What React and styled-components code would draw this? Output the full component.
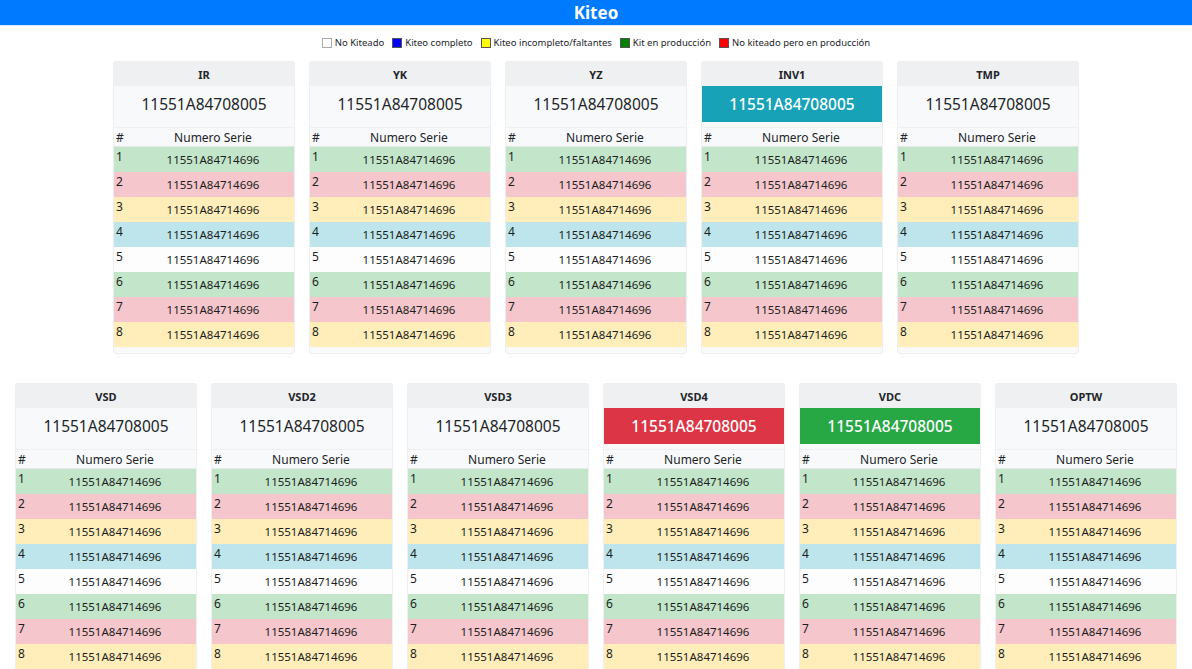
import React from 'react';
import styled, { createGlobalStyle } from 'styled-components';

const GlobalStyle = createGlobalStyle`
  html, body {
    margin: 0;
    padding: 0;
    background: #ffffff;
    font-family: "Noto Sans", "Open Sans", Arial, sans-serif;
    color: #212529;
  }
`;

const Page = styled.div`
  width: 1192px;
  min-height: 669px;
`;

const TopBar = styled.header`
  height: 25px;
  background: #007bff;
  color: #fff;
  display: flex;
  align-items: center;
  justify-content: center;
  font-size: 17px;
  font-weight: 700;
  border-bottom: 1px solid #d6e8ff;
`;

const Legend = styled.div`
  display: flex;
  justify-content: center;
  gap: 8px;
  margin-top: 11px;
  font-size: 9.5px;
  line-height: 12px;
`;

const LegendItem = styled.div`
  display: flex;
  align-items: center;
  gap: 3px;
`;

const Swatch = styled.span`
  width: 8px;
  height: 8px;
  background: ${p => p.$color};
  border: 1px solid ${p => (p.$color === '#ffffff' ? '#aaaaaa' : '#555')};
`;

const CardRow = styled.div`
  display: flex;
  justify-content: center;
  gap: 16px;
  margin-top: ${p => p.$top}px;
`;

const Card = styled.div`
  width: 180px;
  background: #f8f9fa;
  border-radius: 2px;
  box-shadow: 0 0 0 1px #eceef0;
  padding-bottom: 6px;
`;

const CardTitle = styled.div`
  height: 24px;
  background: #eff0f2;
  display: flex;
  align-items: center;
  justify-content: center;
  font-size: 11px;
  font-weight: 700;
`;

const Serial = styled.div`
  height: 36px;
  display: flex;
  align-items: center;
  justify-content: center;
  font-size: 15.5px;
  background: ${p => p.$bg || 'transparent'};
  color: ${p => (p.$bg ? '#fff' : '#212529')};
  font-weight: ${p => (p.$bg ? 500 : 400)};
  margin-bottom: 5px;
`;

const TableHead = styled.div`
  display: grid;
  grid-template-columns: 18px 1fr;
  height: 20px;
  align-items: center;
  font-size: 12px;
  border-top: 1px solid #eef0f2;
  border-bottom: 1px solid #e6e8ea;
  background: #f8f9fa;
  box-sizing: border-box;
`;

const HeadCell = styled.div`
  text-align: ${p => (p.$center ? 'center' : 'left')};
  padding-left: ${p => (p.$center ? 0 : 2)}px;
`;

const Row = styled.div`
  display: grid;
  grid-template-columns: 18px 1fr;
  height: 25px;
  background: ${p => p.$bg};
  font-size: 11.5px;
  color: #1b1e21;
`;

const NumCell = styled.div`
  padding: 2px 0 0 2px;
  line-height: 16px;
  font-size: 12px;
`;

const SerialCell = styled.div`
  text-align: center;
  padding-top: 5px;
  line-height: 16px;
`;

const legend = [
  ['#ffffff', 'No Kiteado'],
  ['#0000ff', 'Kiteo completo'],
  ['#ffff00', 'Kiteo incompleto/faltantes'],
  ['#008000', 'Kit en producción'],
  ['#ff0000', 'No kiteado pero en producción'],
];

const rowColors = ['#c3e6cb', '#f5c6cb', '#ffeeba', '#bee5eb', '#fdfdfe', '#c3e6cb', '#f5c6cb', '#ffeeba'];

const topCards = [
  { name: 'IR' },
  { name: 'YK' },
  { name: 'YZ' },
  { name: 'INV1', bg: '#17a2b8' },
  { name: 'TMP' },
];

const bottomCards = [
  { name: 'VSD' },
  { name: 'VSD2' },
  { name: 'VSD3' },
  { name: 'VSD4', bg: '#dc3545' },
  { name: 'VDC', bg: '#28a745' },
  { name: 'OPTW' },
];

const StationCard = ({ name, bg }) => (
  <Card>
    <CardTitle>{name}</CardTitle>
    <Serial $bg={bg}>11551A84708005</Serial>
    <TableHead>
      <HeadCell>#</HeadCell>
      <HeadCell $center>Numero Serie</HeadCell>
    </TableHead>
    {rowColors.map((c, i) => (
      <Row key={i} $bg={c}>
        <NumCell>{i + 1}</NumCell>
        <SerialCell>11551A84714696</SerialCell>
      </Row>
    ))}
  </Card>
);

const App = () => {
  return (
    <Page>
      <GlobalStyle />
      <TopBar>Kiteo</TopBar>
      <Legend>
        {legend.map(([c, label]) => (
          <LegendItem key={label}>
            <Swatch $color={c} />
            {label}
          </LegendItem>
        ))}
      </Legend>
      <CardRow $top={13}>
        {topCards.map(c => <StationCard key={c.name} {...c} />)}
      </CardRow>
      <CardRow $top={31}>
        {bottomCards.map(c => <StationCard key={c.name} {...c} />)}
      </CardRow>
    </Page>
  );
};

export default App;
